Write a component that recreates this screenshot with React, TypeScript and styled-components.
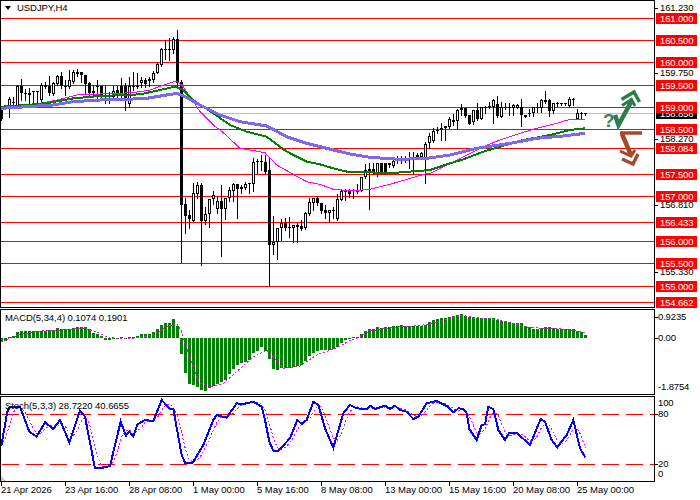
import React from 'react'
import styled, { createGlobalStyle } from 'styled-components'

type Pt = [number, number]
type Candle = [number, number, number, number, number]

const GlobalStyle = createGlobalStyle`
  html, body {
    margin: 0;
    background: #fff;
  }
`

const Page = styled.div`
  width: 700px;
  height: 500px;
  overflow: hidden;
  display: flex;
  flex-direction: column;
  background: #fff;
  color: #000;
  font-family: 'Liberation Sans', Arial, sans-serif;
  font-size: 9.5px;
  line-height: 10px;
`

const Pane = styled.div<{ $h: number }>`
  display: flex;
  flex: none;
  height: ${(p) => p.$h}px;
  & + & {
    margin-top: 1px;
  }
`

const ChartFrame = styled.div`
  position: relative;
  width: 655px;
  box-sizing: border-box;
  border: 1px solid #000;
`

const ChartSvg = styled.svg`
  display: block;
`

const PaneTitle = styled.div<{ $top: number }>`
  position: absolute;
  left: 4px;
  top: ${(p) => p.$top}px;
  display: flex;
  align-items: center;
  gap: 6px;
  letter-spacing: -0.06px;
  white-space: nowrap;
`

const DropMark = styled.span`
  width: 0;
  height: 0;
  border-left: 3.5px solid transparent;
  border-right: 3.5px solid transparent;
  border-top: 4px solid #000;
`

const Axis = styled.div`
  position: relative;
  flex: 1;
  overflow: hidden;
`

const Tick = styled.i<{ $y: number }>`
  position: absolute;
  left: 0;
  top: ${(p) => p.$y}px;
  width: 3px;
  height: 1px;
  background: #000;
`

const AxisLabel = styled.span<{ $y: number; $left: number }>`
  position: absolute;
  left: ${(p) => p.$left}px;
  top: ${(p) => p.$y - 5}px;
  height: 10px;
  letter-spacing: -0.15px;
  white-space: nowrap;
`

const PriceTag = styled.span<{ $y: number; $bg: string }>`
  position: absolute;
  left: 1px;
  top: ${(p) => p.$y - 5}px;
  width: 41px;
  height: 11px;
  box-sizing: border-box;
  padding-left: 4px;
  background: ${(p) => p.$bg};
  color: #fff;
  line-height: 11px;
  letter-spacing: -0.15px;
  white-space: nowrap;
`

const TimeAxis = styled.div`
  display: flex;
  flex: 1;
  padding-left: 1px;
`

const TimeCell = styled.div`
  position: relative;
  flex: none;
  width: 64px;
  padding: 3px 0 0;
  box-sizing: border-box;
  white-space: nowrap;
  letter-spacing: -0.05px;
  &::before {
    content: '';
    position: absolute;
    left: 0;
    top: 0;
    width: 1px;
    height: 4px;
    background: #000;
  }
`

// candles read off the chart at 3x: wick top, body top, body bottom, wick bottom, black?
const upperLeft: Candle[] = [
  [325, 330, 358, 360, 1], [318, 320, 324, 326, 1], [290, 298, 318, 350, 0], [290, 305, 308, 320, 1],
  [255, 258, 318, 320, 0], [238, 258, 278, 300, 1], [268, 280, 283, 300, 1], [265, 278, 285, 310, 0],
  [272, 272, 275, 320, 1], [272, 272, 276, 310, 1], [250, 255, 300, 310, 0], [245, 255, 262, 265, 1],
  [228, 258, 280, 285, 1], [245, 248, 282, 285, 0], [225, 228, 252, 255, 0], [215, 228, 258, 265, 1],
  [240, 258, 262, 285, 1], [210, 240, 262, 265, 0], [210, 216, 245, 250, 0], [208, 216, 222, 228, 1],
  [215, 216, 226, 245, 1], [225, 225, 252, 280, 1], [245, 250, 280, 285, 1], [255, 272, 280, 290, 1],
  [240, 258, 260, 300, 1], [258, 258, 290, 300, 1], [258, 288, 290, 310, 1], [275, 288, 290, 310, 1],
  [258, 272, 290, 300, 0], [258, 270, 280, 290, 1], [235, 258, 280, 300, 1], [250, 258, 300, 330, 1],
  [230, 258, 312, 322, 0], [215, 258, 262, 270, 1], [220, 258, 262, 265, 1], [232, 240, 250, 262, 0],
  [235, 240, 252, 262, 1], [230, 238, 243, 258, 0], [212, 218, 240, 245, 0], [185, 192, 218, 220, 0],
  [143, 147, 195, 198, 0], [122, 146, 150, 178, 1], [115, 146, 150, 180, 1], [112, 118, 150, 160, 0],
  [90, 118, 250, 262, 1], [240, 245, 615, 785, 1],
]

// these two blocks were read from the lower crop, 450 higher up
const lowerLeft: Candle[] = [
  [143, 162, 197, 248, 1], [180, 195, 207, 233, 1], [98, 130, 212, 212, 0], [97, 105, 132, 143, 0],
  [100, 105, 213, 344, 1], [170, 192, 212, 222, 0], [148, 148, 193, 230, 0], [122, 135, 148, 162, 0],
  [140, 153, 177, 188, 0], [105, 153, 177, 317, 1], [143, 145, 177, 207, 0], [110, 120, 145, 152, 0],
  [100, 102, 122, 152, 0], [103, 103, 117, 205, 1], [105, 110, 118, 130, 0], [97, 102, 113, 118, 0],
  [98, 100, 102, 130, 1], [25, 37, 103, 122, 0], [28, 33, 37, 68, 1], [15, 33, 37, 60, 1],
  [15, 35, 65, 68, 1], [20, 60, 285, 405, 1], [197, 277, 285, 312, 0], [235, 235, 277, 327, 0],
  [208, 218, 235, 270, 0], [205, 218, 235, 240, 1], [202, 230, 232, 262, 1], [225, 225, 233, 275, 0],
  [218, 226, 230, 275, 1], [210, 228, 238, 240, 1], [185, 188, 235, 238, 0], [143, 157, 192, 195, 0],
  [143, 143, 158, 180, 0], [140, 143, 160, 165, 1], [158, 158, 183, 190, 1], [165, 180, 188, 205, 1],
  [180, 180, 188, 217, 0], [170, 180, 184, 205, 1], [133, 147, 207, 210, 0], [118, 122, 150, 150, 0],
  [118, 120, 125, 150, 1], [118, 122, 132, 140, 1], [118, 120, 124, 143, 1], [103, 122, 125, 130, 1],
  [82, 82, 122, 122, 0], [42, 60, 82, 85, 0], [40, 58, 62, 177, 1], [40, 58, 70, 72, 1],
  [38, 40, 72, 78, 0], [38, 40, 70, 72, 1], [38, 40, 70, 72, 1], [38, 40, 45, 50, 1],
  [30, 32, 47, 50, 0], [18, 30, 33, 40, 1], [18, 30, 33, 38, 1], [18, 28, 30, 35, 1],
  [5, 25, 27, 55, 1], [5, 20, 25, 70, 0], [8, 15, 20, 25, 1], [5, 10, 20, 25, 0],
]

const upperRight: Candle[] = [
  [425, 432, 475, 548, 0], [398, 408, 430, 445, 0], [385, 392, 422, 425, 0], [380, 390, 393, 400, 1],
  [368, 385, 390, 420, 1], [378, 378, 385, 420, 1], [352, 358, 382, 385, 0], [342, 360, 365, 375, 1],
  [328, 330, 362, 388, 0], [312, 325, 330, 345, 1], [325, 325, 348, 350, 1], [345, 345, 372, 372, 1],
  [330, 330, 365, 372, 0], [308, 330, 358, 360, 1], [320, 320, 358, 358, 0], [318, 320, 322, 340, 1],
  [305, 318, 322, 325, 1], [296, 300, 322, 368, 0], [288, 312, 348, 352, 1], [305, 320, 350, 352, 0],
  [308, 320, 322, 328, 1], [310, 322, 324, 345, 1], [312, 315, 325, 345, 0], [312, 315, 325, 325, 0],
  [298, 320, 345, 378, 1], [345, 345, 350, 352, 1], [328, 338, 340, 348, 1], [322, 322, 340, 348, 0],
  [308, 322, 325, 335, 1], [298, 300, 325, 335, 0], [273, 300, 305, 310, 1], [298, 300, 332, 348, 1],
  [310, 310, 332, 338, 0], [305, 310, 313, 318, 1], [308, 310, 313, 316, 1], [308, 310, 313, 316, 1],
  [292, 298, 318, 320, 0], [295, 297, 300, 315, 1], [328, 338, 358, 358, 0], [335, 338, 340, 358, 1],
  [340, 340, 342, 344, 1],
]

const candles: Candle[] = [
  ...upperLeft,
  ...lowerLeft.map(([a, b, c, d, e]): Candle => [a + 450, b + 450, c + 450, d + 450, e]),
  ...upperRight,
]

const ma5: Pt[] = [
  [4, 325], [80, 318], [170, 300], [230, 285], [300, 282], [400, 278], [450, 270], [500, 252], [530, 243],
  [548, 258], [570, 290], [600, 335], [640, 375], [670, 398], [720, 445], [750, 450], [795, 458], [830, 495],
  [880, 523], [920, 545], [960, 553], [1000, 568], [1050, 572], [1085, 570], [1110, 568], [1180, 550],
  [1275, 522], [1290, 520], [1350, 490], [1410, 460], [1450, 440], [1500, 420], [1550, 403], [1610, 385],
  [1670, 370], [1710, 358], [1755, 358],
]
const ma34: Pt[] = [
  [4, 320], [80, 315], [150, 308], [220, 295], [300, 288], [420, 283], [480, 270], [525, 260], [550, 270],
  [580, 300], [640, 340], [690, 375], [740, 395], [800, 410], [850, 448], [880, 465], [920, 485], [960, 493],
  [1000, 505], [1050, 517], [1190, 518], [1290, 510], [1350, 490], [1390, 478], [1450, 455], [1500, 440],
  [1570, 420], [1650, 405], [1710, 390], [1755, 385],
]
const ma50: Pt[] = [
  [4, 325], [80, 320], [160, 315], [220, 305], [300, 300], [380, 298], [440, 295], [500, 285], [530, 280],
  [555, 290], [600, 315], [660, 345], [720, 365], [800, 378], [860, 410], [920, 430], [980, 445], [1050, 462],
  [1110, 472], [1200, 478], [1280, 475], [1350, 465], [1430, 445], [1530, 430], [1610, 415], [1690, 408],
  [1755, 400],
]

const macdBars = [
  -12, -9, 3, 6, 18, 20, 20, 21, 22, 22, 21, 21, 24, 25, 29, 26, 27, 27, 29, 32, 33, 32, 27, 14, 12, 5, -6, -5,
  -1, -1, 2, -3, 1, 3, 7, 11, 11, 13, 18, 27, 38, 44, 45, 56, 35, -47, -105, -138, -142, -146, -156, -159, -150,
  -143, -137, -133, -125, -108, -92, -82, -75, -72, -65, -46, -38, -27, -38, -62, -92, -95, -90, -90, -90, -88,
  -84, -80, -70, -55, -45, -40, -36, -36, -35, -33, -28, -14, -5, -2, 1, 4, 11, 22, 27, 27, 33, 31, 32, 33, 36,
  35, 39, 36, 36, 35, 35, 36, 40, 48, 54, 57, 59, 60, 62, 65, 68, 71, 67, 63, 62, 60, 60, 60, 59, 59, 53, 52, 50,
  47, 46, 45, 44, 37, 33, 28, 28, 30, 32, 32, 30, 28, 27, 27, 26, 26, 22, 18, 9,
]
const macdSignal: Pt[] = [
  [0, 112], [30, 100], [60, 88], [120, 78], [180, 75], [250, 70], [290, 80], [320, 95], [350, 100], [400, 100],
  [460, 90], [500, 65], [530, 55], [545, 80], [560, 130], [580, 190], [600, 235], [630, 245], [670, 235],
  [710, 200], [760, 155], [800, 135], [820, 155], [850, 190], [900, 183], [950, 150], [1000, 133], [1050, 107],
  [1080, 95], [1110, 78], [1170, 68], [1250, 62], [1290, 58], [1350, 40], [1390, 32], [1450, 40], [1500, 45],
  [1570, 65], [1630, 70], [1690, 72], [1755, 82],
]

const stochK: Pt[] = [
  [4, 422], [22, 320], [30, 305], [60, 305], [88, 380], [110, 395], [135, 352], [160, 372], [180, 345], [208, 412],
  [240, 318], [255, 335], [285, 490], [300, 490], [330, 483], [362, 350], [378, 392], [388, 380], [400, 395],
  [412, 358], [435, 345], [460, 348], [485, 285], [510, 312], [520, 312], [545, 450], [555, 473], [578, 473],
  [610, 420], [640, 345], [650, 330], [680, 338], [710, 295], [730, 297], [760, 290], [785, 305], [795, 345],
  [808, 410], [820, 437], [835, 437], [870, 400], [892, 345], [905, 357], [920, 345], [940, 290], [955, 300],
  [975, 370], [1000, 428], [1030, 325], [1050, 300], [1070, 310], [1100, 312], [1110, 302], [1125, 312],
  [1155, 302], [1170, 312], [1185, 302], [1200, 315], [1220, 320], [1240, 342], [1255, 335], [1280, 295],
  [1310, 288], [1340, 303], [1360, 322], [1375, 310], [1390, 312], [1400, 325], [1408, 372], [1430, 405],
  [1445, 360], [1455, 358], [1465, 305], [1480, 312], [1495, 375], [1515, 405], [1528, 383], [1550, 383],
  [1590, 420], [1622, 342], [1635, 350], [1655, 405], [1672, 427], [1700, 390], [1720, 345], [1740, 430],
  [1756, 457],
]

const yAt = (pts: Pt[], x: number) => {
  const i = pts.findIndex((p) => p[0] >= x)
  if (i <= 0) return pts[0][1]
  const [x0, y0] = pts[i - 1]
  const [x1, y1] = pts[i]
  return y0 + ((y1 - y0) * (x - x0)) / (x1 - x0)
}

// %D is the 3 bar average of %K
const stochD: Pt[] = candles.map((_, k) => {
  const at = (n: number) => yAt(stochK, 4 + 12 * Math.max(n, 0))
  return [4 + 12 * k, (at(k) + at(k - 1) + at(k - 2)) / 3]
})

const toPoints = (pts: Pt[], dy = 0) => pts.map(([x, y]) => `${x / 3},${y / 3 + dy}`).join(' ')

const levels = [18, 40, 62, 85, 107, 129, 148, 174, 196, 222, 241, 263, 286, 302]

const priceTags: [string, number][] = [
  ['161.000', 18], ['160.500', 40], ['160.000', 62], ['159.500', 85], ['159.000', 107], ['158.500', 129],
  ['158.084', 148], ['157.500', 174], ['157.000', 196], ['156.433', 222], ['156.000', 241], ['155.500', 263],
  ['155.000', 286], ['154.662', 302],
]
const priceScale: [string, number][] = [
  ['161.230', 8], ['159.750', 73], ['158.270', 139], ['156.810', 205], ['155.330', 272], ['154.510', 310],
]
const times = [
  '21 Apr 2026', '23 Apr 16:00', '28 Apr 08:00', '1 May 00:00', '5 May 16:00',
  '8 May 08:00', '13 May 00:00', '15 May 16:00', '20 May 08:00', '25 May 00:00',
]

const PriceChart = () => (
  <ChartSvg width={653} height={306} viewBox="1 1 653 306">
    <g shapeRendering="crispEdges">
      <rect x={1} y={113} width={653} height={1} fill="#c0c0c0" />
      {levels.map((y) => (
        <rect key={y} x={1} y={y} width={653} height={1} fill="#f00" />
      ))}
      {candles.map(([hi, top, bottom, lo, black], k) => {
        const x = 1 + 4 * k
        const y0 = Math.round(top / 3)
        const y1 = Math.max(Math.round(bottom / 3), y0 + 1)
        return (
          <g key={k}>
            <rect x={x} y={Math.round(hi / 3)} width={1} height={Math.round(lo / 3) - Math.round(hi / 3) + 1} fill="#000" />
            {black ? (
              <rect x={x - 1} y={y0} width={3} height={y1 - y0} fill="#000" />
            ) : (
              <rect x={x - 0.5} y={y0 + 0.5} width={2} height={y1 - y0 - 1} fill="#fff" stroke="#000" />
            )}
          </g>
        )
      })}
      <polyline points={toPoints(ma5)} fill="none" stroke="#f0f" strokeWidth={1} />
      <polyline points={toPoints(ma34)} fill="none" stroke="#008000" strokeWidth={2} />
      <polyline points={toPoints(ma50)} fill="none" stroke="#7b68ee" strokeWidth={3} />
    </g>
    <g fill="none" stroke="#2f7d4c" strokeLinejoin="miter">
      <polyline points="615,115 618.5,125 631,102" strokeWidth={4.5} />
      <polyline points="621.5,99.5 634,92 639.5,102" strokeWidth={3.5} />
      <polyline points="622,105.5 631.5,99.5 635,106" strokeWidth={3} />
    </g>
    <text x={603} y={127} fontFamily="'Liberation Sans', Arial, sans-serif" fontWeight={700} fontSize={19} fill="#3a8258">
      ?
    </text>
    <g fill="none" stroke="#a5482a" strokeLinejoin="miter">
      <polyline points="620,133 642,133" strokeWidth={3.5} />
      <polyline points="622,134 631,155" strokeWidth={4.5} />
      <polyline points="620,151 631,156 635,150" strokeWidth={3} />
      <polyline points="622,159 633,164 638,154" strokeWidth={3.5} />
    </g>
  </ChartSvg>
)

const MacdChart = () => (
  <ChartSvg width={653} height={84} viewBox="1 310 653 84">
    <g shapeRendering="crispEdges">
      {macdBars.map((v, k) => {
        const h = Math.max(Math.round(Math.abs(v) / 3), 1)
        return <rect key={k} x={4 * k} y={v > 0 ? 338 - h : 338} width={3} height={h} fill="#008000" />
      })}
      <polyline points={toPoints(macdSignal, 305)} fill="none" stroke="#f0f" strokeDasharray="2 2" />
    </g>
  </ChartSvg>
)

const StochChart = () => (
  <ChartSvg width={653} height={84} viewBox="1 397 653 84">
    <g shapeRendering="crispEdges">
      <line x1={-22} x2={654} y1={414.5} y2={414.5} stroke="#f00" strokeDasharray="17 7" />
      <line x1={-22} x2={654} y1={464.5} y2={464.5} stroke="#f00" strokeDasharray="17 7" />
      <polyline points={toPoints(stochD, 305)} fill="none" stroke="#f0f" strokeDasharray="2 2" />
      <polyline points={toPoints(stochK, 305)} fill="none" stroke="#00f" strokeWidth={2} />
    </g>
    <polygon points="1,476 1,481 6,481" fill="#c8c8c8" />
  </ChartSvg>
)

const App = () => (
  <Page>
    <GlobalStyle />
    <Pane $h={308}>
      <ChartFrame>
        <PriceChart />
        <PaneTitle $top={2}>
          <DropMark />
          USDJPY,H4
        </PaneTitle>
      </ChartFrame>
      <Axis>
        {priceScale.map(([text, y]) => (
          <React.Fragment key={text}>
            <Tick $y={y} />
            <AxisLabel $y={y} $left={5}>{text}</AxisLabel>
          </React.Fragment>
        ))}
        <PriceTag $y={113} $bg="#000">158.856</PriceTag>
        {priceTags.map(([text, y]) => (
          <PriceTag key={text} $y={y} $bg="#f00">{text}</PriceTag>
        ))}
      </Axis>
    </Pane>
    <Pane $h={86}>
      <ChartFrame>
        <MacdChart />
        <PaneTitle $top={3}>MACD(5,34,4) 0.1074 0.1901</PaneTitle>
      </ChartFrame>
      <Axis>
        <Tick $y={8} />
        <AxisLabel $y={8} $left={3}>0.9235</AxisLabel>
        <Tick $y={29} />
        <AxisLabel $y={29} $left={3}>0.00</AxisLabel>
        <AxisLabel $y={78} $left={3}>-1.8754</AxisLabel>
      </Axis>
    </Pane>
    <Pane $h={86}>
      <ChartFrame>
        <StochChart />
        <PaneTitle $top={4}>Stoch(5,3,3) 28.7220 40.6655</PaneTitle>
      </ChartFrame>
      <Axis>
        <AxisLabel $y={7} $left={3}>100</AxisLabel>
        <Tick $y={18} />
        <AxisLabel $y={18} $left={3}>80</AxisLabel>
        <Tick $y={68} />
        <AxisLabel $y={68} $left={3}>20</AxisLabel>
        <AxisLabel $y={78} $left={3}>0</AxisLabel>
      </Axis>
    </Pane>
    <TimeAxis>
      {times.map((t) => (
        <TimeCell key={t}>{t}</TimeCell>
      ))}
    </TimeAxis>
  </Page>
)

export default App
